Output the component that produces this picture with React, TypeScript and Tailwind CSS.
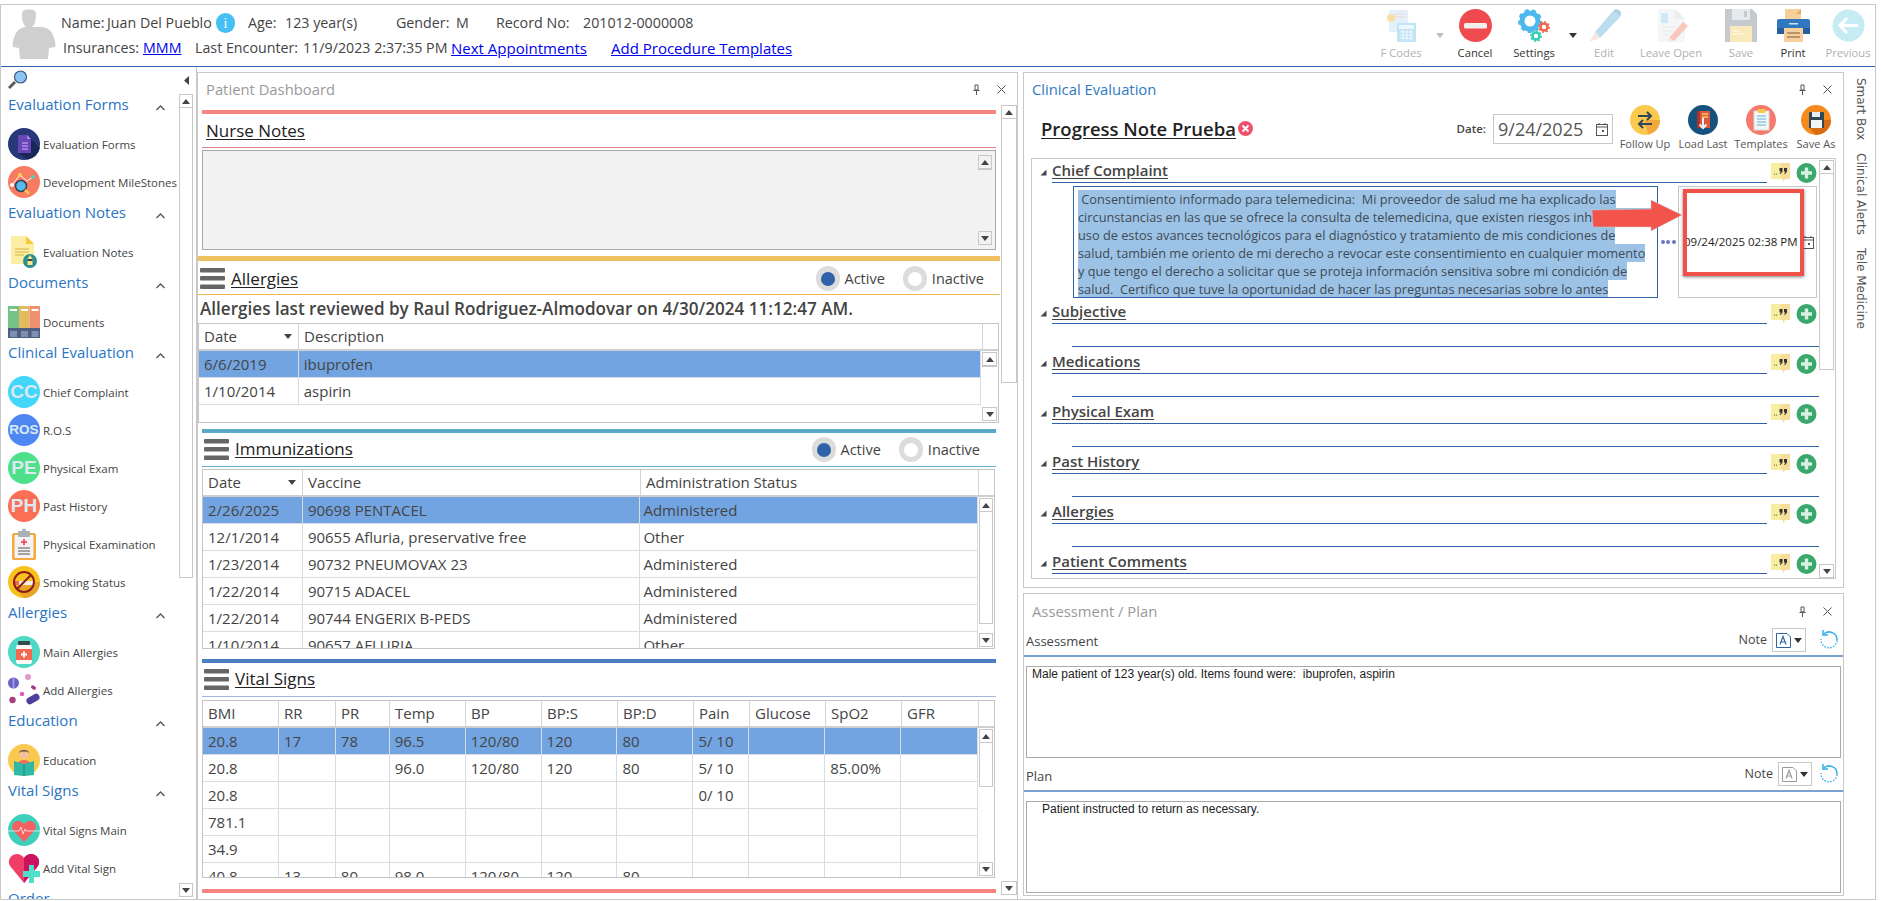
import type { ReactNode } from "react";

const vitalCols = [76, 57, 54, 76, 76, 76, 76, 56, 76, 76, 77];
const immunCols = [100, 338, 338];

function Tri({ dir = "down", color = "#444" }: { dir?: "up" | "down" | "left" | "corner"; color?: string }) {
  if (dir === "corner") return <svg width="7" height="7" viewBox="0 0 7 7"><path d="M6.5 0.5V6.5H0.5Z" fill={color} /></svg>;
  if (dir === "left") return <svg width="5" height="9" viewBox="0 0 5 9"><path d="M5 0V9L0 4.5Z" fill={color} /></svg>;
  const d = dir === "up" ? "M4 0L8 5H0Z" : "M0 0H8L4 5Z";
  return <svg width="8" height="5" viewBox="0 0 8 5"><path d={d} fill={color} /></svg>;
}

function ScrollBar({ thumb, width = "w-[15px]", btn = "h-[14px]" }: { thumb: number; width?: string; btn?: string }) {
  return (
    <div className={`flex h-full shrink-0 flex-col ${width}`}>
      <div className={`flex shrink-0 items-center justify-center border border-[#c8c8c8] ${btn}`}><Tri dir="up" /></div>
      <div className="shrink-0 border-x border-b border-[#c8c8c8]" style={{ height: thumb }} />
      <div className="flex-1" />
      <div className={`flex shrink-0 items-center justify-center border border-[#c8c8c8] ${btn}`}><Tri dir="down" /></div>
    </div>
  );
}

function Hamburger() {
  return (
    <svg width="25" height="21" viewBox="0 0 25 21" className="shrink-0">
      <rect y="0" width="25" height="4.5" rx="1" fill="#666" />
      <rect y="8" width="25" height="4.5" rx="1" fill="#666" />
      <rect y="16.5" width="25" height="4.5" rx="1" fill="#666" />
    </svg>
  );
}

function Radio({ on, label }: { on?: boolean; label: string }) {
  return (
    <div className="flex items-center gap-[5px]">
      <div className="flex h-[25px] w-[24px] items-center justify-center rounded-full bg-[#dcdcdc]">
        <div className={`h-[14px] w-[14px] rounded-full ${on ? "bg-[#2f62a8]" : "bg-white"}`} />
      </div>
      <span className="text-[14.5px] text-[#444]">{label}</span>
    </div>
  );
}

function PanelHead({ title, blue, className = "h-[32px]" }: { title: string; blue?: boolean; className?: string }) {
  return (
    <div className={`flex shrink-0 items-center justify-between pr-[11px] pl-[8px] ${className}`}>
      <span className={`text-[14.8px] ${blue ? "text-[#2f7ac0]" : "text-[#9a9a9a]"}`}>{title}</span>
      <div className="flex items-center gap-[17px]">
        <svg width="7" height="11" viewBox="0 0 7 11"><path d="M2 1H5V6H2ZM0.5 6.5H6.5M3.5 7V11" fill="none" stroke="#555" strokeWidth="1" /></svg>
        <svg width="9" height="9" viewBox="0 0 9 9"><path d="M0.5 0.5L8.5 8.5M8.5 0.5L0.5 8.5" stroke="#555" strokeWidth="1" /></svg>
      </div>
    </div>
  );
}

function GridTable({
  cols, headers, rows, height, scrollW, thumb, sortFirst, cellPad = "pl-[3px]",
}: {
  cols: number[]; headers: string[]; rows: string[][]; height: number; scrollW: string; thumb: number; sortFirst?: boolean; cellPad?: string;
}) {
  return (
    <div className="flex flex-col overflow-hidden border border-[#c4c4c4] text-[15px] text-[#444]" style={{ height }}>
      <div className="flex h-[27px] shrink-0 border-b-2 border-[#cfcfcf]">
        {headers.map((h, i) => (
          <div key={h} className="flex items-center justify-between border-r border-[#d4d4d4] pr-[6px] pl-[5px]" style={{ width: cols[i] }}>
            <span className="whitespace-nowrap">{h}</span>
            {sortFirst && i === 0 && <Tri dir="down" />}
          </div>
        ))}
        <div className="flex-1" />
      </div>
      <div className="flex min-h-0 flex-1">
        <div className="min-w-0 flex-1 overflow-hidden">
          {rows.map((row, r) => (
            <div key={r} className={`flex h-[27px] shrink-0 border-b border-[#d8dde3] ${r === 0 ? "bg-[#72a4e2]" : ""}`}>
              {row.map((c, i) => (
                <div key={i} className={`flex items-center whitespace-nowrap border-r border-[#d8dde3] ${i === 0 ? "pl-[5px]" : i === 1 || cols.length > 3 ? "pl-[5px]" : cellPad}`} style={{ width: cols[i] }}>{c}</div>
              ))}
            </div>
          ))}
        </div>
        <div className="p-[1px]">
          <ScrollBar thumb={thumb} width={scrollW} />
        </div>
      </div>
    </div>
  );
}

function CircleTxt({ text, bg, size = "text-[15px]" }: { text: string; bg: string; size?: string }) {
  return (
    <div className={`flex h-[32px] w-[32px] shrink-0 items-center justify-center rounded-full font-['Liberation_Sans',sans-serif] font-bold text-[#dbe9f2] ${size}`} style={{ background: bg }}>
      {text}
    </div>
  );
}

const IconEvalForms = (
  <svg width="32" height="32" viewBox="0 0 32 32"><circle cx="16" cy="16" r="16" fill="#26387a" /><path d="M20 8L32 20A16 16 0 0 1 20 31.5L10 25Z" fill="#1a2558" /><path d="M10 7H19L23 11V25H10Z" fill="#6a45b8" /><path d="M19 7L23 11H19Z" fill="#a98be0" /><path d="M14 15H20M14 18H20M14 21H20" stroke="#cbbcf0" strokeWidth="1" /></svg>
);
const IconMilestones = (
  <svg width="32" height="32" viewBox="0 0 32 32"><circle cx="16" cy="16" r="16" fill="#f97b62" /><path d="M4 19L12 9L19 15L25 11" stroke="#fff" strokeWidth="1" fill="none" /><circle cx="4" cy="19" r="2" fill="#fff" /><circle cx="12" cy="9" r="2" fill="#f7d154" /><circle cx="25" cy="11" r="2" fill="#4ad1c5" /><circle cx="13" cy="20" r="5.5" fill="#55bbe8" stroke="#33415c" strokeWidth="1.5" /><path d="M17 24L21 28" stroke="#f7c948" strokeWidth="2.5" /></svg>
);
const IconEvalNotes = (
  <svg width="32" height="32" viewBox="0 0 32 32"><path d="M3 0H18L26 8V28H3Z" fill="#fdeea6" /><path d="M18 0L26 8H18Z" fill="#f8c93c" /><path d="M7 13H21M7 16H21M7 19H16" stroke="#d6b13f" strokeWidth="1.2" /><circle cx="22" cy="25" r="7" fill="#2b8f8f" /><path d="M22 19L24.5 23V29H19.5V23Z" fill="#fde68a" /><path d="M19.5 23H24.5V25H19.5Z" fill="#37474f" /></svg>
);
const IconDocuments = (
  <svg width="32" height="32" viewBox="0 0 32 32"><rect width="11" height="23" fill="#74c487" /><rect x="11" width="10.5" height="23" fill="#e3ba5c" /><rect x="21.5" width="10.5" height="23" fill="#ee8f6f" /><rect y="22" width="32" height="10" fill="#4f5f7d" /><rect x="2" y="25" width="7" height="6" fill="#7e8fb5" /><rect x="13" y="25" width="7" height="6" fill="#7e8fb5" /><rect x="23.5" y="25" width="7" height="6" fill="#7e8fb5" /><rect x="2" y="3" width="7" height="2" fill="#fff" /><rect x="13" y="3" width="7" height="2" fill="#fff" /><rect x="23.5" y="3" width="7" height="2" fill="#fff" /></svg>
);
const IconClipboard = (
  <svg width="32" height="32" viewBox="0 0 32 32"><rect x="4" y="5" width="24" height="27" rx="2" fill="#f5a93e" /><rect x="6.5" y="7" width="19" height="23" fill="#f3f3f3" /><rect x="10" y="3" width="12" height="6" rx="1" fill="#a8b3b8" /><circle cx="16" cy="2.5" r="2" fill="#a8b3b8" /><path d="M16 11V17M13 14H19" stroke="#ef5a6f" strokeWidth="2" /><path d="M10 20H22M10 23H22M10 26H22" stroke="#555" strokeWidth="1" /></svg>
);
const IconSmoking = (
  <svg width="32" height="32" viewBox="0 0 32 32"><circle cx="16" cy="16" r="16" fill="#f9c11c" /><path d="M16 16H32A16 16 0 0 1 16 32L6 22Z" fill="#e39e2c" opacity="0.8" /><rect x="5" y="15" width="22" height="4" fill="#f3ece0" /><rect x="5" y="15" width="6" height="4" fill="#ef6c4a" /><circle cx="16" cy="16" r="10" fill="none" stroke="#8f1d1d" strokeWidth="2" /><path d="M9 23L23 9" stroke="#8f1d1d" strokeWidth="2" /></svg>
);
const IconMainAllergies = (
  <svg width="32" height="32" viewBox="0 0 32 32"><circle cx="16" cy="16" r="16" fill="#4fd8c4" /><rect x="10" y="5" width="12" height="4" rx="1" fill="#37474f" /><rect x="8" y="9" width="16" height="19" rx="2" fill="#fafafa" /><rect x="8" y="13" width="16" height="11" fill="#f4694f" /><path d="M16 15.5V21.5M13 18.5H19" stroke="#fff" strokeWidth="2" /></svg>
);
const IconAddAllergies = (
  <svg width="32" height="32" viewBox="0 0 32 32"><circle cx="5.5" cy="9" r="5.5" fill="#6a63c7" /><rect x="4.7" y="3.5" width="1.6" height="11" fill="#a9a4e6" /><circle cx="20" cy="3" r="3" fill="#e39ac6" /><ellipse cx="25.5" cy="13.5" rx="2.8" ry="1.8" fill="#a33c86" transform="rotate(35 25.5 13.5)" /><circle cx="14" cy="20" r="2.2" fill="#e55cb6" /><circle cx="4.5" cy="26" r="3.2" fill="#a8407f" /><rect x="18" y="21.5" width="14" height="7" rx="3.5" fill="#4f3f9f" transform="rotate(-30 25 25)" /></svg>
);
const IconEducation = (
  <svg width="32" height="32" viewBox="0 0 32 32"><circle cx="16" cy="16" r="16" fill="#fbc94e" /><path d="M8 24C8 18 12 16 16 16S24 18 24 24Z" fill="#ee6c5c" /><circle cx="16" cy="10" r="5" fill="#f3c29a" /><path d="M11 9C11 5 21 5 21 9L19 7.5H13Z" fill="#5c3a21" /><path d="M6 17L16 20L26 17V31L16 32L6 31Z" fill="#2fb8a6" /><path d="M16 20V32" stroke="#1c8c7e" strokeWidth="1" /></svg>
);
const IconVitalMain = (
  <svg width="32" height="32" viewBox="0 0 32 32"><circle cx="16" cy="16" r="16" fill="#3fd0bd" /><path d="M16 28L5 16C1 9 11 3 16 10C21 3 31 9 27 16Z" fill="#f4605f" /><path d="M0 17H11L13 13L15 20L17 15L18 17H32" stroke="#f4f4f4" strokeWidth="0.8" fill="none" /></svg>
);
const IconVitalAdd = (
  <svg width="32" height="32" viewBox="0 0 32 32"><path d="M16 31L2 14C-3 5 10 -3 16 6C22 -3 35 5 30 14Z" fill="#f23d68" /><path d="M16 6C22 -3 35 5 30 14L16 31Z" fill="#c9135f" /><path d="M21 13H26V19H32V25H26V31H21V25H15V19H21Z" fill="#4fe0cc" /></svg>
);

const sideSections: { title: string; items: { label: string; icon: ReactNode }[] }[] = [
  { title: "Evaluation Forms", items: [{ label: "Evaluation Forms", icon: IconEvalForms }, { label: "Development MileStones", icon: IconMilestones }] },
  { title: "Evaluation Notes", items: [{ label: "Evaluation Notes", icon: IconEvalNotes }] },
  { title: "Documents", items: [{ label: "Documents", icon: IconDocuments }] },
  {
    title: "Clinical Evaluation",
    items: [
      { label: "Chief Complaint", icon: <CircleTxt text="CC" bg="#43d6fb" size="text-[19px]" /> },
      { label: "R.O.S", icon: <CircleTxt text="ROS" bg="#4f87f2" size="text-[13.5px]" /> },
      { label: "Physical Exam", icon: <CircleTxt text="PE" bg="#4ee08a" size="text-[19px]" /> },
      { label: "Past History", icon: <CircleTxt text="PH" bg="#fb6f57" size="text-[19px]" /> },
      { label: "Physical Examination", icon: IconClipboard },
      { label: "Smoking Status", icon: IconSmoking },
    ],
  },
  { title: "Allergies", items: [{ label: "Main Allergies", icon: IconMainAllergies }, { label: "Add Allergies", icon: IconAddAllergies }] },
  { title: "Education", items: [{ label: "Education", icon: IconEducation }] },
  { title: "Vital Signs", items: [{ label: "Vital Signs Main", icon: IconVitalMain }, { label: "Add Vital Sign", icon: IconVitalAdd }] },
  { title: "Order", items: [] },
];

function Sidebar() {
  return (
    <div className="flex w-[196px] shrink-0 flex-col border-r border-[#c8c8c8]">
      <div className="flex h-[26px] shrink-0 items-center justify-between pr-[7px] pl-[7px]">
        <svg width="20" height="20" viewBox="0 0 20 20"><path d="M7 12L1 18" stroke="#5a5a5a" strokeWidth="3" /><circle cx="12.5" cy="7" r="6" fill="#8cc4f5" stroke="#3d5a78" strokeWidth="1.2" /></svg>
        <Tri dir="left" color="#444" />
      </div>
      <div className="flex min-h-0 flex-1 pr-[3px]">
        <div className="min-w-0 flex-1 overflow-hidden">
          {sideSections.map((s) => (
            <div key={s.title}>
              <div className="flex h-[32px] items-start justify-between pr-[14px] pl-[7px] text-[15px] leading-[22px] text-[#2a75c4]">
                <span>{s.title}</span>
                <svg width="9" height="6" viewBox="0 0 9 6" className="mt-[12px]"><path d="M0.5 5L4.5 1L8.5 5" stroke="#555" strokeWidth="1.3" fill="none" /></svg>
              </div>
              {s.items.map((it) => (
                <div key={it.label} className="flex h-[38px] items-start pt-[3px] pl-[7px]">
                  <div className="flex h-[32px] w-[32px] shrink-0">{it.icon}</div>
                  <span className="mt-[8px] ml-[3px] whitespace-nowrap text-[11.5px] text-[#444]">{it.label}</span>
                </div>
              ))}
            </div>
          ))}
        </div>
        <div className="pt-[1px] pb-[2px]">
          <ScrollBar thumb={470} width="w-[14px]" />
        </div>
      </div>
    </div>
  );
}

function Bar({ color, className = "mr-[5px] ml-[4px] h-[4px]" }: { color: string; className?: string }) {
  return <div className={`shrink-0 ${className}`} style={{ background: color }} />;
}

function SecHead({ title, line, icon, children, pl = "mr-[5px] ml-[4px]", raise }: { title: string; line: string; icon?: boolean; children?: ReactNode; pl?: string; raise?: boolean }) {
  return (
    <div className={`flex h-[34px] shrink-0 items-center justify-between border-b ${pl}`} style={{ borderColor: line }}>
      <div className={`flex items-center gap-[6px] ${icon ? "pl-[2px]" : "pl-[4px]"}`}>
        {icon && <Hamburger />}
        <span className={`text-[17px] text-[#222] underline underline-offset-2 ${raise ? "mb-[2px]" : ""}`}>{title}</span>
      </div>
      {children}
    </div>
  );
}

function Dashboard() {
  return (
    <div className="flex h-[828px] w-[821px] shrink-0 flex-col border border-[#c8c8c8]">
      <PanelHead title="Patient Dashboard" />
      <div className="flex min-h-0 flex-1">
        <div className="flex w-[803px] flex-col overflow-hidden pt-[5px]">
          <Bar color="#f78480" />
          <SecHead title="Nurse Notes" line="#e08484" />
          <div className="mt-[2px] mr-[5px] ml-[4px] flex h-[100px] shrink-0 justify-end border border-[#aaa] bg-[#f2f2f2] py-[4px] pr-[3px]">
            <ScrollBar thumb={0} width="w-[14px]" />
          </div>
          <Bar color="#f0c060" className="mt-[6px] mr-[1px] h-[5px]" />
          <SecHead title="Allergies" line="#ecb84f" icon pl="mr-[1px] h-[32px] pt-[2px]">
            <div className="flex items-center gap-[18px] pr-[16px]"><Radio on label="Active" /><Radio label="Inactive" /></div>
          </SecHead>
          <div className="flex h-[28px] shrink-0 items-center pl-[2px] text-[17.1px] font-semibold whitespace-nowrap text-[#444]">
            Allergies last reviewed by Raul Rodriguez-Almodovar on 4/30/2024 11:12:47 AM.
          </div>
          <div className="mr-[2px]">
            <GridTable cols={[100, 684]} headers={["Date", "Description"]} rows={[["6/6/2019", "ibuprofen"], ["1/10/2014", "aspirin"]]} height={100} scrollW="w-[15px]" thumb={0} sortFirst />
          </div>
          <Bar color="#5aa9c9" className="mt-[6px] mr-[5px] ml-[4px] h-[4px]" />
          <SecHead title="Immunizations" line="#6fb0d5" icon raise>
            <div className="flex items-center gap-[18px] pr-[16px]"><Radio on label="Active" /><Radio label="Inactive" /></div>
          </SecHead>
          <div className="mt-[2px] mr-[6px] ml-[4px]">
            <GridTable
              cols={immunCols}
              headers={["Date", "Vaccine", "Administration Status"]}
              rows={[
                ["2/26/2025", "90698 PENTACEL", "Administered"],
                ["12/1/2014", "90655 Afluria, preservative free", "Other"],
                ["1/23/2014", "90732 PNEUMOVAX 23", "Administered"],
                ["1/22/2014", "90715 ADACEL", "Administered"],
                ["1/22/2014", "90744 ENGERIX B-PEDS", "Administered"],
                ["1/10/2014", "90657 AFLURIA", "Other"],
              ]}
              height={180}
              scrollW="w-[14px]"
              thumb={112}
              sortFirst
            />
          </div>
          <Bar color="#4a80c0" className="mt-[10px] mr-[5px] ml-[4px] h-[4px]" />
          <SecHead title="Vital Signs" line="#9db8d8" icon raise />
          <div className="mt-[3px] mr-[6px] ml-[4px]">
            <GridTable
              cols={vitalCols}
              headers={["BMI", "RR", "PR", "Temp", "BP", "BP:S", "BP:D", "Pain", "Glucose", "SpO2", "GFR"]}
              rows={[
                ["20.8", "17", "78", "96.5", "120/80", "120", "80", "5/ 10", "", "", ""],
                ["20.8", "", "", "96.0", "120/80", "120", "80", "5/ 10", "", "85.00%", ""],
                ["20.8", "", "", "", "", "", "", "0/ 10", "", "", ""],
                ["781.1", "", "", "", "", "", "", "", "", "", ""],
                ["34.9", "", "", "", "", "", "", "", "", "", ""],
                ["40.8", "13", "80", "98.0", "120/80", "120", "80", "", "", "", ""],
              ]}
              height={178}
              scrollW="w-[14px]"
              thumb={44}
            />
          </div>
          <Bar color="#f78480" className="mt-[11px] mr-[5px] ml-[4px] h-[4px]" />
        </div>
        <div className="pb-[4px]">
          <ScrollBar thumb={264} width="w-[16px]" />
        </div>
      </div>
    </div>
  );
}

function NoteIcon() {
  return (
    <svg width="19" height="20" viewBox="0 0 19 20"><path d="M0 0H19V16H14L12 19V16H0Z" fill="#f9ee9f" /><path d="M9.5 0H19V16H14L12 19V16H9.5Z" fill="#f6dd99" /><circle cx="3.5" cy="11" r="0.6" fill="#444" /><circle cx="5.5" cy="11" r="0.6" fill="#444" /><path d="M8.5 5H11.5V8.5L9.5 11H8.7L9.8 8.5H8.5ZM13 5H16V8.5L14 11H13.2L14.3 8.5H13Z" fill="#333" /></svg>
  );
}

function PlusIcon() {
  return (
    <svg width="21" height="20" viewBox="0 0 21 20"><circle cx="10.5" cy="10" r="10" fill="#3aa76b" /><path d="M10.5 4.5V15.5M5 10H16" stroke="#d8efe4" strokeWidth="3.4" /></svg>
  );
}

function ClinicalHead({ title }: { title: string }) {
  return (
    <div className="flex h-[24px] shrink-0">
      <div className="flex w-[20px] items-center justify-center pt-[2px] pl-[2px]"><Tri dir="corner" color="#444" /></div>
      <div className="flex h-[24px] w-[715px] items-center border-b border-[#2f62a8] text-[15px] font-semibold text-[#444]">
        <span className="underline underline-offset-2">{title}</span>
      </div>
      <div className="flex items-center gap-[6px] pt-[3px] pl-[4px]"><NoteIcon /><PlusIcon /></div>
    </div>
  );
}

function CalendarIcon() {
  return (
    <svg width="12" height="13" viewBox="0 0 12 13"><rect x="0.5" y="1.5" width="11" height="11" fill="none" stroke="#555" /><path d="M0.5 4H11.5M3 0V2M9 0V2" stroke="#555" /><rect x="6" y="7" width="2" height="2" fill="#555" /></svg>
  );
}

const consent = [
  " Consentimiento informado para telemedicina:  Mi proveedor de salud me ha explicado las",
  "circunstancias en las que se ofrece la consulta de telemedicina, que existen riesgos inherentes al",
  "uso de estos avances tecnológicos para el diagnóstico y tratamiento de mis condiciones de",
  "salud, también me oriento de mi derecho a revocar este consentimiento en cualquier momento",
  "y que tengo el derecho a solicitar que se proteja información sensitiva sobre mi condición de",
  "salud.  Certifico que tuve la oportunidad de hacer las preguntas necesarias sobre lo antes",
];

function FollowIcon() {
  return <svg width="30" height="30" viewBox="0 0 30 30"><circle cx="15" cy="15" r="15" fill="#fbc94e" /><path d="M15 15L30 15A15 15 0 0 1 18 29.7Z" fill="#f0a93a" /><path d="M8 11H21M17 7L21 11L17 15M22 19H9M13 15L9 19L13 23" stroke="#2f4858" strokeWidth="2" fill="none" /></svg>;
}
function LoadIcon() {
  return <svg width="30" height="30" viewBox="0 0 30 30"><circle cx="15" cy="15" r="15" fill="#17517e" /><rect x="9" y="6" width="13" height="17" fill="#e2563b" /><rect x="9" y="6" width="3" height="17" fill="#a9362a" /><path d="M14 9H20M14 12H20" stroke="#f8d06a" strokeWidth="1.5" /><path d="M15 13V23M11.5 19.5L15 23L18.5 19.5" stroke="#e6f2f8" strokeWidth="2" fill="none" /></svg>;
}
function TemplatesIcon() {
  return <svg width="30" height="30" viewBox="0 0 30 30"><circle cx="15" cy="15" r="15" fill="#f57a6c" /><rect x="8" y="6" width="15" height="19" fill="#f5f5f5" stroke="#d8d8d8" /><rect x="12" y="4" width="7" height="4" fill="#f7c94b" /><path d="M11 11H20M11 14H20M11 17H20M11 20H20" stroke="#5cb0d8" /></svg>;
}
function SaveAsIcon() {
  return <svg width="30" height="30" viewBox="0 0 30 30"><circle cx="15" cy="15" r="15" fill="#f58a1f" /><path d="M15 15H30A15 15 0 0 1 15 30L9 24Z" fill="#d96b15" /><rect x="8" y="7" width="15" height="16" rx="1" fill="#2f4858" /><rect x="11" y="7" width="8" height="5" fill="#e8edf0" /><rect x="10" y="15" width="11" height="8" fill="#f3f3f3" /></svg>;
}

function ToolBtn({ icon, label, w = "w-[58px]" }: { icon: ReactNode; label: string; w?: string }) {
  return (
    <div className={`flex flex-col items-center ${w}`}>
      <div className="flex h-[30px] items-center">{icon}</div>
      <span className="mt-[1px] text-[11px] leading-[15px] whitespace-nowrap text-[#555]">{label}</span>
    </div>
  );
}

function Clinical() {
  return (
    <div className="flex h-[516px] flex-col border border-[#c8c8c8]">
      <PanelHead title="Clinical Evaluation" blue />
      <div className="flex h-[53px] shrink-0 items-start justify-between pr-[1px] pl-[17px]">
        <div className="mt-[10px] flex items-center gap-[2px]">
          <span className="text-[18.5px] font-semibold text-[#222] underline underline-offset-2">Progress Note Prueba</span>
          <svg width="15" height="15" viewBox="0 0 15 15"><circle cx="7.5" cy="7.5" r="7.5" fill="#f0506e" /><path d="M4.5 4.5L10.5 10.5M10.5 4.5L4.5 10.5" stroke="#fff" strokeWidth="2" /></svg>
        </div>
        <div className="flex items-start">
          <div className="mt-[9px] flex items-center">
            <span className="mr-[7px] text-[11.5px] font-semibold text-[#444]">Date:</span>
            <div className="flex h-[30px] w-[120px] items-center justify-between border border-[#c8c8c8] pr-[4px] pl-[4px] text-[18px] text-[#555]">
              <span>9/24/2025</span>
              <CalendarIcon />
            </div>
          </div>
          <div className="ml-[3px] flex">
            <ToolBtn icon={<FollowIcon />} label="Follow Up" />
            <ToolBtn icon={<LoadIcon />} label="Load Last" />
            <ToolBtn icon={<TemplatesIcon />} label="Templates" />
            <ToolBtn icon={<SaveAsIcon />} label="Save As" w="w-[52px]" />
          </div>
        </div>
      </div>
      <div className="mx-[7px] flex h-[421px] border border-[#c8c8c8]">
        <div className="w-[787px] overflow-hidden">
          <ClinicalHead title="Chief Complaint" />
          <div className="relative mt-[3px] mb-[2px] ml-[41px] flex h-[112px]">
            <div className="h-full w-[585px] overflow-hidden border border-[#2f62a8] pt-[3px] pl-[4px]">
              {consent.map((l) => (
                <div key={l} className="h-[18px] w-fit bg-[#9cc3e6] text-[12.75px] leading-[18px] whitespace-pre text-[#3f4a55]">{l}</div>
              ))}
            </div>
            <div className="flex w-[20px] items-center justify-center gap-[1.5px]">
              <span className="h-[4px] w-[4px] rounded-full bg-[#6a75c9]" />
              <span className="h-[4px] w-[4px] rounded-full bg-[#6a75c9]" />
              <span className="h-[4px] w-[4px] rounded-full bg-[#6a75c9]" />
            </div>
            <div className="flex h-full w-[139px] items-center justify-between border border-[#c8c8c8] pr-[2px] pl-[5px] text-[11.5px] whitespace-nowrap text-[#222]">
              <span>09/24/2025 02:38 PM</span>
              <CalendarIcon />
            </div>
            <div className="absolute top-[3px] left-[610px] h-[87px] w-[121px] border-4 border-[#f0524a] shadow-[0_1px_3px_rgba(0,0,0,0.5)]" />
            <svg width="92" height="32" viewBox="0 0 92 32" className="absolute top-[14px] left-[518px]">
              <path d="M1 10L60 9L60 0L91 15L60 31L60 27L2 27Z" fill="#f2544c" stroke="#c9c9c9" strokeWidth="0.5" />
            </svg>
          </div>
          {["Subjective", "Medications", "Physical Exam", "Past History", "Allergies"].map((t) => (
            <div key={t} className="h-[50px]">
              <ClinicalHead title={t} />
              <div className="ml-[40px] h-[23px] border-b border-[#2f62a8]" />
            </div>
          ))}
          <ClinicalHead title="Patient Comments" />
        </div>
        <div className="flex-1 pt-[1px]">
          <ScrollBar thumb={196} width="w-[15px]" />
        </div>
      </div>
    </div>
  );
}

function RefreshIcon() {
  return (
    <svg width="20" height="20" viewBox="0 0 20 20"><path d="M4.3 4.4A8 8 0 0 1 18 10.5" fill="none" stroke="#35aef0" strokeWidth="1.5" /><path d="M18 10.5A8 8 0 1 1 2 9" fill="none" stroke="#35aef0" strokeWidth="1.4" strokeDasharray="1.5 1.5" /><path d="M4 0V5H9" fill="none" stroke="#35aef0" strokeWidth="1.5" /></svg>
  );
}

function FontDrop({ faded }: { faded?: boolean }) {
  const c = faded ? "#999" : "#2f62a8";
  return (
    <div className="flex h-[24px] w-[34px] items-center justify-center gap-[3px] border border-[#c8c8c8]">
      <svg width="15" height="15" viewBox="0 0 15 15"><path d="M0.5 0.5H11L14.5 4V14.5H0.5Z" fill="none" stroke={c} /><path d="M4 11.5L7 3.5L10 11.5M5 9H9" fill="none" stroke={c} strokeWidth="1.2" /></svg>
      <Tri dir="down" color="#333" />
    </div>
  );
}

function Assessment() {
  return (
    <div className="mt-[5px] flex h-[303px] flex-col border border-[#c8c8c8]">
      <PanelHead title="Assessment / Plan" className="h-[34px]" />
      <div className="flex h-[29px] shrink-0 items-start justify-between border-b-2 border-[#7aa2d0] pl-[2px]">
        <span className="mt-[4px] text-[13px] text-[#444]">Assessment</span>
        <div className="flex items-center">
          <span className="mr-[5px] text-[12.5px] text-[#444]">Note</span>
          <FontDrop />
          <div className="mr-[4px] ml-[13px]"><RefreshIcon /></div>
        </div>
      </div>
      <div className="mx-[2px] mt-[9px] h-[92px] shrink-0 border border-[#aaa] pl-[5px] font-['Liberation_Sans',sans-serif] text-[12px] leading-[15px] whitespace-pre text-[#222]">
        Male patient of 123 year(s) old. Items found were:  ibuprofen, aspirin
      </div>
      <div className="flex h-[34px] shrink-0 items-start justify-between border-b-2 border-[#7aa2d0] pt-[4px] pl-[2px]">
        <span className="mt-[5px] text-[13px] text-[#444]">Plan</span>
        <div className="flex items-center">
          <span className="mr-[5px] text-[12.5px] text-[#444]">Note</span>
          <FontDrop faded />
          <div className="mr-[4px] ml-[7px]"><RefreshIcon /></div>
        </div>
      </div>
      <div className="mx-[2px] mt-[9px] h-[92px] shrink-0 border border-[#aaa] pl-[15px] font-['Liberation_Sans',sans-serif] text-[12px] leading-[15px] text-[#222]">
        Patient instructed to return as necessary.
      </div>
    </div>
  );
}

function ToolItem({ icon, label, faded, w, caret }: { icon: ReactNode; label: string; faded?: boolean; w: string; caret?: string }) {
  return (
    <div className={`relative flex flex-col items-center ${w}`}>
      <div className="flex h-[33px] items-center">{icon}</div>
      <span className={`mt-[3px] text-[11.25px] leading-[16px] whitespace-nowrap ${faded ? "text-[#b0b0b0]" : "text-[#333]"}`}>{label}</span>
      {caret && <div className="absolute top-[24px] -right-[17px]"><Tri dir="down" color={caret} /></div>}
    </div>
  );
}

const FCodes = (
  <svg width="30" height="32" viewBox="0 0 30 32" opacity="0.55"><rect x="3" y="0" width="19" height="22" fill="#cfe6f7" /><path d="M8 4H20M8 7H20" stroke="#f2b8b0" /><circle cx="5" cy="8" r="4" fill="#f7c65c" /><rect x="11" y="13" width="19" height="19" fill="#8fcdf0" /><rect x="13" y="15" width="15" height="4" fill="#dff1fb" /><path d="M14 22H27M14 25H27M14 28H27M17 20V31M21 20V31M25 20V31" stroke="#e5f4fc" /></svg>
);
const Cancel = (
  <svg width="33" height="33" viewBox="0 0 33 33"><circle cx="16.5" cy="16.5" r="16.5" fill="#ef4b4f" /><rect x="5" y="14" width="23" height="5.5" rx="1.5" fill="#f1eeee" /></svg>
);
const Settings = (
  <svg width="33" height="33" viewBox="0 0 33 33">
    <circle cx="12" cy="12" r="8" fill="none" stroke="#4db8ee" strokeWidth="5" /><circle cx="12" cy="12" r="10.5" fill="none" stroke="#4db8ee" strokeWidth="3" strokeDasharray="4 3.3" />
    <circle cx="26" cy="18" r="3.5" fill="none" stroke="#f0674f" strokeWidth="2.6" /><circle cx="26" cy="18" r="5.2" fill="none" stroke="#f0674f" strokeWidth="1.5" strokeDasharray="2 2" />
    <circle cx="18" cy="27" r="3.5" fill="none" stroke="#37cdb4" strokeWidth="2.6" /><circle cx="18" cy="27" r="5.2" fill="none" stroke="#37cdb4" strokeWidth="1.5" strokeDasharray="2 2" />
  </svg>
);
const Edit = (
  <svg width="33" height="33" viewBox="0 0 33 33" opacity="0.6"><path d="M7 23L25 2L32 8L12 29Z" fill="#8fc7e2" /><path d="M25 2L27 0.5C28 0 30 0 32 2S33 5 32 8Z" fill="#79b6d4" /><path d="M7 23L12 29L1 33Z" fill="#f2d8cc" /></svg>
);
const LeaveOpen = (
  <svg width="33" height="33" viewBox="0 0 33 33" opacity="0.5"><path d="M3 0H20L30 10V33H3Z" fill="#eceff2" /><path d="M20 0L30 10H20Z" fill="#d9dee2" /><rect x="6" y="4" width="7" height="10" fill="#9fd4f2" /><path d="M7 18H20M7 22H17M7 26H14" stroke="#cfd6db" /><path d="M14 29L28 13L33 17L19 32Z" fill="#f2907f" /><path d="M14 29L19 32L12 33Z" fill="#f5d7b5" /></svg>
);
const Save = (
  <svg width="32" height="33" viewBox="0 0 32 33" opacity="0.6"><path d="M0 0H27L32 5V33H0Z" fill="#a0a8b0" /><rect x="7" y="0" width="18" height="11" fill="#d8dde0" /><rect x="19" y="2" width="3" height="6" fill="#a0a8b0" /><rect x="5" y="17" width="22" height="16" fill="#f7dc8e" /><path d="M8 22H14M8 25H18" stroke="#fff" /></svg>
);
const Print = (
  <svg width="33" height="33" viewBox="0 0 33 33"><rect x="8" y="0" width="16" height="12" fill="#f7cf9c" /><path d="M24 0L24 5H19Z" fill="#e5a96a" /><rect x="0" y="10" width="33" height="15" rx="2" fill="#2f78c0" /><rect x="0" y="19" width="33" height="6" fill="#245f9c" /><rect x="7" y="19" width="19" height="14" fill="#f7cf9c" /><path d="M10 24H23M10 28H23" stroke="#7c5a3a" /><rect x="12" y="14" width="9" height="1.5" fill="#cfe4f7" /></svg>
);
const Previous = (
  <svg width="33" height="33" viewBox="0 0 33 33" opacity="0.6"><circle cx="16.5" cy="16.5" r="16" fill="#9fe0ea" /><path d="M8 16.5H26M15 9L8 16.5L15 24" stroke="#fff" strokeWidth="3" fill="none" /></svg>
);

function Header() {
  return (
    <div className="flex h-[62px] shrink-0 items-start justify-between border-b border-[#2f65ad]">
      <div className="flex items-start">
        <svg width="44" height="50" viewBox="0 0 44 50" className="mt-[4px] ml-[11px]">
          <path d="M11 2C13 0 21 0 23 2C24.5 3 24 10 23 13C22 16 21 17 20 18H14C13 17 12 16 11 13C10 10 9.5 3 11 2Z" fill="#cfcfcf" />
          <path d="M14 18H30C36 19 38 21 40 24C43 30 44 36 43 38L37 39L36 50H8L7 39L1 38C0 36 1 30 4 24C6 21 8 19 14 18Z" fill="#cfcfcf" />
        </svg>
        <div className="ml-[5px] text-[14.25px] text-[#444]">
          <div className="mt-[6px] flex h-[24px] items-center whitespace-nowrap">
            <span className="w-[46px] font-medium">Name:</span>
            <span className="w-[109px]">Juan Del Pueblo</span>
            <div className="flex h-[20px] w-[19px] items-center justify-center rounded-full bg-[#44c0f5] font-['Liberation_Serif',serif] text-[14px] text-white">i</div>
            <span className="ml-[13px] w-[37px] font-medium">Age:</span>
            <span className="w-[111px]">123 year(s)</span>
            <span className="w-[60px] font-medium">Gender:</span>
            <span className="w-[40px]">M</span>
            <span className="w-[87px] font-medium">Record No:</span>
            <span>201012-0000008</span>
          </div>
          <div className="mt-[2px] ml-[2px] flex h-[22px] items-center whitespace-nowrap">
            <span className="w-[80px] font-medium">Insurances:</span>
            <span className="w-[52px] text-[#0000ee] underline">MMM</span>
            <span className="w-[108px] font-medium">Last Encounter:</span>
            <span className="w-[148px]">11/9/2023 2:37:35 PM</span>
            <span className="w-[160px] text-[15px] text-[#0000ee] underline">Next Appointments</span>
            <span className="text-[15px] text-[#0000ee] underline">Add Procedure Templates</span>
          </div>
        </div>
      </div>
      <div className="mt-[4px] mr-[2px] flex items-start">
        <ToolItem icon={FCodes} label="F Codes" faded w="w-[52px]" caret="#bbb" />
        <ToolItem icon={Cancel} label="Cancel" w="w-[50px] ml-[23px]" />
        <ToolItem icon={Settings} label="Settings" w="w-[52px] ml-[8px]" caret="#333" />
        <ToolItem icon={Edit} label="Edit" faded w="w-[38px] ml-[25px]" />
        <ToolItem icon={LeaveOpen} label="Leave Open" faded w="w-[72px] ml-[12px]" />
        <ToolItem icon={Save} label="Save" faded w="w-[36px] ml-[16px]" />
        <ToolItem icon={Print} label="Print" w="w-[36px] ml-[16px]" />
        <ToolItem icon={Previous} label="Previous" faded w="w-[50px] ml-[12px]" />
      </div>
    </div>
  );
}

export default function App() {
  return (
    <div className="h-[901px] w-[1881px] overflow-hidden bg-white pt-[4px] font-['Open_Sans','Liberation_Sans',sans-serif]">
      <div className="flex h-[896px] w-[1876px] flex-col border border-[#c8c8c8]">
        <Header />
        <div className="flex min-h-0 flex-1">
          <Sidebar />
          <div className="flex min-w-0 flex-1 pt-[5px]">
            <Dashboard />
            <div className="ml-[5px] w-[821px] shrink-0">
              <Clinical />
              <Assessment />
            </div>
            <div className="flex flex-1 flex-col items-start gap-[13px] pt-[6px] pl-[8px] font-['DejaVu_Sans',sans-serif] text-[12px] text-[#555]">
              <span className="[writing-mode:vertical-rl]">Smart Box</span>
              <span className="[writing-mode:vertical-rl]">Clinical Alerts</span>
              <span className="[writing-mode:vertical-rl]">Tele Medicine</span>
            </div>
          </div>
        </div>
      </div>
    </div>
  );
}
